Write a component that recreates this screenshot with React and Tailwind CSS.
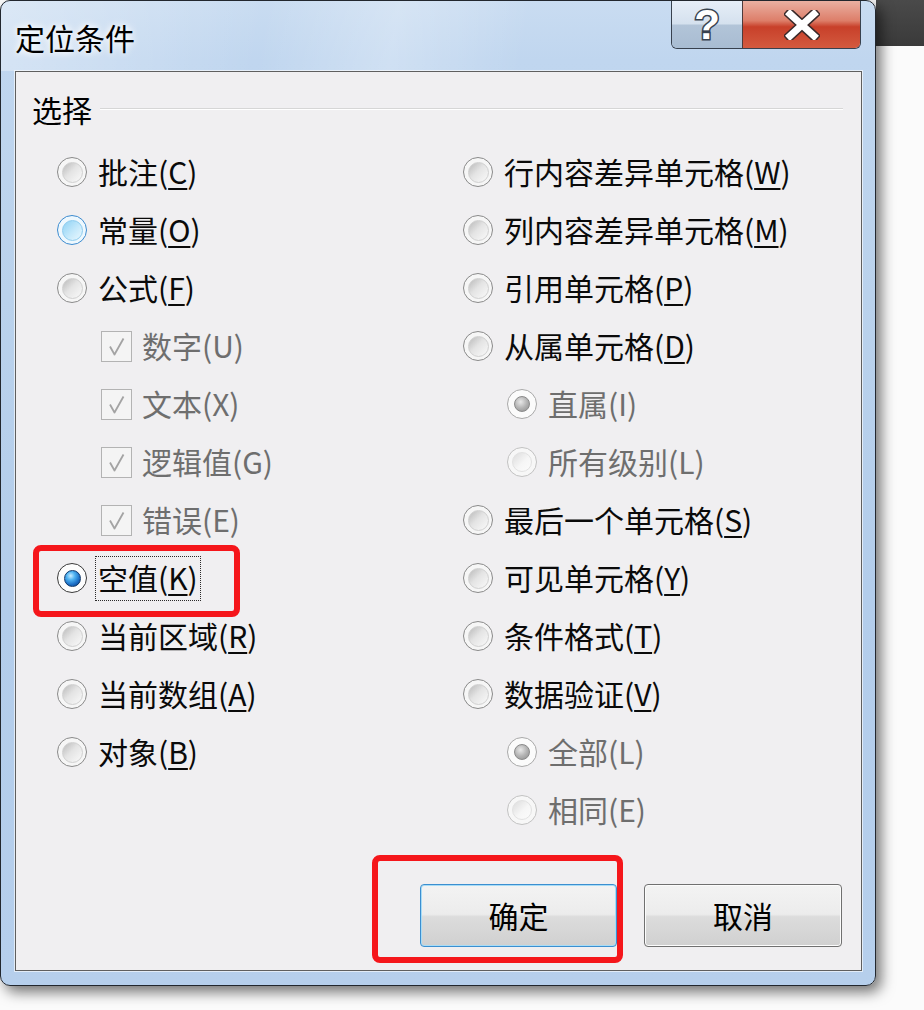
import React from "react";

const leftItems = [
  { label: "批注", key: "C", kind: "normal" },
  { label: "常量", key: "O", kind: "hover" },
  { label: "公式", key: "F", kind: "normal" },
  { label: "数字", key: "U", kind: "check", indent: true },
  { label: "文本", key: "X", kind: "check", indent: true },
  { label: "逻辑值", key: "G", kind: "check", indent: true },
  { label: "错误", key: "E", kind: "check", indent: true },
  { label: "空值", key: "K", kind: "checked", focus: true },
  { label: "当前区域", key: "R", kind: "normal" },
  { label: "当前数组", key: "A", kind: "normal" },
  { label: "对象", key: "B", kind: "normal" },
];

const rightItems = [
  { label: "行内容差异单元格", key: "W", kind: "normal" },
  { label: "列内容差异单元格", key: "M", kind: "normal" },
  { label: "引用单元格", key: "P", kind: "normal" },
  { label: "从属单元格", key: "D", kind: "normal" },
  { label: "直属", key: "I", kind: "disabledChecked", indent: true },
  { label: "所有级别", key: "L", kind: "disabled", indent: true },
  { label: "最后一个单元格", key: "S", kind: "normal" },
  { label: "可见单元格", key: "Y", kind: "normal" },
  { label: "条件格式", key: "T", kind: "normal" },
  { label: "数据验证", key: "V", kind: "normal" },
  { label: "全部", key: "L", kind: "disabledChecked", indent: true },
  { label: "相同", key: "E", kind: "disabled", indent: true },
];

function Radio({ kind }) {
  if (kind === "checked") {
    return (
      <div className="w-[30px] h-[30px] rounded-full border border-[#3a3a3a] bg-[#fdfdfd] flex items-center justify-center shrink-0">
        <div className="w-[17px] h-[17px] rounded-full border border-[#10386a] bg-[radial-gradient(circle_at_38%_32%,#c9ecff_0%,#4fb3f2_30%,#1a6cc4_65%,#0b3b78_100%)]" />
      </div>
    );
  }
  if (kind === "disabledChecked") {
    return (
      <div className="w-[30px] h-[30px] rounded-full border border-[#a9a9a9] bg-[#fbfbfb] flex items-center justify-center shrink-0">
        <div className="w-[16px] h-[16px] rounded-full border border-[#8a8a8a] bg-[radial-gradient(circle_at_40%_35%,#e8e8e8_0%,#b4b4b4_50%,#8c8c8c_100%)]" />
      </div>
    );
  }
  if (kind === "disabled") {
    return (
      <div className="w-[30px] h-[30px] rounded-full border border-[#c2c2c2] bg-[#f7f7f7] flex items-center justify-center shrink-0">
        <div className="w-[20px] h-[20px] rounded-full border border-[#e2e2e2] bg-[linear-gradient(135deg,#dcdcdc_0%,#f6f6f6_55%,#fcfcfc_100%)]" />
      </div>
    );
  }
  if (kind === "hover") {
    return (
      <div className="w-[30px] h-[30px] rounded-full border border-[#3d8bcf] bg-[#eef8fe] flex items-center justify-center shrink-0">
        <div className="w-[21px] h-[21px] rounded-full border border-[#8ccbee] bg-[linear-gradient(135deg,#8fd2f4_0%,#c5e9fb_55%,#eaf8ff_100%)]" />
      </div>
    );
  }
  return (
    <div className="w-[30px] h-[30px] rounded-full border border-[#8a8a8a] bg-[#f6f6f6] flex items-center justify-center shrink-0">
      <div className="w-[21px] h-[21px] rounded-full border border-[#d0d0d0] bg-[linear-gradient(135deg,#b9b9b9_0%,#e4e4e4_45%,#fafafa_100%)]" />
    </div>
  );
}

function Check() {
  return (
    <div className="w-[31px] h-[31px] border border-[#b3b3b3] bg-[#f4f4f4] flex items-center justify-center shrink-0">
      <svg width="29" height="29" viewBox="0 0 29 29">
        <path d="M8 14.5 L12.5 22.5 L21.5 6.5" fill="none" stroke="#a3a3a3" strokeWidth="1.8" strokeLinejoin="round" />
      </svg>
    </div>
  );
}

function Option({ item }) {
  const disabled = item.kind === "check" || item.kind === "disabled" || item.kind === "disabledChecked";
  const text = (
    <span className={`text-[30px] leading-[30px] whitespace-nowrap ${disabled ? "text-[#6e6e6e]" : "text-[#0a0a0a]"}`}>
      {item.label}(
      {disabled ? item.key : <span className="underline decoration-[2px] underline-offset-[4px]">{item.key}</span>})
    </span>
  );
  return (
    <div className={`h-[58px] flex items-center ${item.indent ? "pl-[44px]" : ""}`}>
      {item.kind === "check" ? <Check /> : <Radio kind={item.kind} />}
      <div className={item.kind === "check" ? "ml-[10px]" : "ml-[11px]"}>
        {item.focus ? (
          <span className="-ml-[3px] inline-block border border-dotted border-[#2a2a2a] px-[2px] py-[5px]">{text}</span>
        ) : (
          text
        )}
      </div>
    </div>
  );
}

export default function App() {
  return (
    <div
      className="relative flex w-[924px] h-[1010px] overflow-hidden bg-[#fbfbfb]"
      style={{ fontFamily: '"Noto Sans CJK SC", "Noto Sans", sans-serif' }}
    >
      {/* Window */}
      <div className="relative z-10 w-[876px] h-[986px] shrink-0 flex flex-col rounded-[10px] border border-[#22272e] bg-[linear-gradient(180deg,#c9dcf1_0%,#c0d6ef_6%,#bad2ec_30%,#b3cdeb_60%,#b6cfec_100%)] shadow-[5px_6px_14px_rgba(0,0,0,0.55)]">
        {/* Title bar */}
        <div className="h-[70px] flex items-start shrink-0 rounded-t-[10px] bg-[linear-gradient(100deg,rgba(255,255,255,0.35)_0%,rgba(255,255,255,0)_30%,rgba(255,255,255,0.25)_45%,rgba(255,255,255,0)_60%)]">
          <div className="pl-[14px] pt-[17px] text-[30px] leading-[38px] text-black [text-shadow:0_0_10px_#fff,0_0_6px_#fff]">
            定位条件
          </div>
          <div className="ml-auto mr-[14px] flex h-[48px] rounded-b-[6px] border border-t-0 border-[#38414e] overflow-hidden">
            <div className="w-[70px] flex items-center justify-center bg-[linear-gradient(180deg,#e6eef8_0%,#d5e1ee_48%,#b2c4d8_52%,#a8bcd2_100%)]">
              <span
                className="text-[42px] leading-none font-bold text-white [-webkit-text-stroke:3px_#38424f] [paint-order:stroke_fill]"
                style={{ fontFamily: '"Liberation Sans", sans-serif' }}
              >
                ?
              </span>
            </div>
            <div className="w-[118px] flex items-center justify-center border-l border-[#4d3a3a] bg-[linear-gradient(180deg,#eab0a2_0%,#dd7e69_42%,#c8402a_55%,#d35a3f_100%)]">
              <svg width="36" height="30" viewBox="0 0 36 30">
                <path d="M6 4 L30 26 M30 4 L6 26" stroke="#3a2a2a" strokeWidth="10" strokeLinecap="square" />
                <path d="M6 4 L30 26 M30 4 L6 26" stroke="#ffffff" strokeWidth="7" strokeLinecap="square" />
              </svg>
            </div>
          </div>
        </div>

        {/* Content panel */}
        <div className="ml-[14px] mr-[13px] mb-[14px] flex-1 flex flex-col border border-[#5f5f5f] bg-[#f0eff1] shadow-[0_0_0_1px_rgba(255,255,255,0.6)]">
          <div className="mt-[23px] h-[28px] flex items-center pl-[16px] pr-[18px]">
            <span className="text-[30px] leading-[28px] text-black">选择</span>
            <div className="flex-1 ml-[8px] border-t border-[#d6d6d6] border-b border-b-white" />
          </div>

          <div className="mt-[20px] pl-[41px] grid grid-cols-[406px_1fr]">
            <div className="flex flex-col">
              {leftItems.map((item) => (
                <Option key={item.label} item={item} />
              ))}
            </div>
            <div className="flex flex-col">
              {rightItems.map((item) => (
                <Option key={item.label} item={item} />
              ))}
            </div>
          </div>

          <div className="mt-auto mb-[23px] pr-[19px] flex justify-end gap-[27px]">
            <button className="w-[197px] h-[63px] rounded-[4px] border border-[#3c8fd0] shadow-[inset_0_0_0_1px_#a8dcf6] bg-[linear-gradient(180deg,#f3f3f3_0%,#ececec_48%,#dcdcdc_52%,#d0d0d0_100%)] text-[30px] text-black">
              确定
            </button>
            <button className="w-[198px] h-[63px] rounded-[4px] border border-[#707070] shadow-[inset_0_0_0_1px_#fcfcfc] bg-[linear-gradient(180deg,#f3f3f3_0%,#ececec_48%,#dcdcdc_52%,#d0d0d0_100%)] text-[30px] text-black">
              取消
            </button>
          </div>
        </div>
      </div>

      {/* Background behind the window */}
      <div className="flex-1 flex flex-col">
        <div className="h-[46px] bg-[linear-gradient(180deg,#4a4a4a,#3a3a3a)]" />
        <div className="flex-1 bg-[#fbfbfb]" />
      </div>

      {/* Red annotation boxes */}
      <div className="absolute z-20 left-[33px] top-[545px] w-[207px] h-[72px] rounded-[8px] border-[6px] border-[#f5161b]" />
      <div className="absolute z-20 left-[372px] top-[855px] w-[251px] h-[108px] rounded-[8px] border-[6px] border-[#f5161b]" />
    </div>
  );
}
